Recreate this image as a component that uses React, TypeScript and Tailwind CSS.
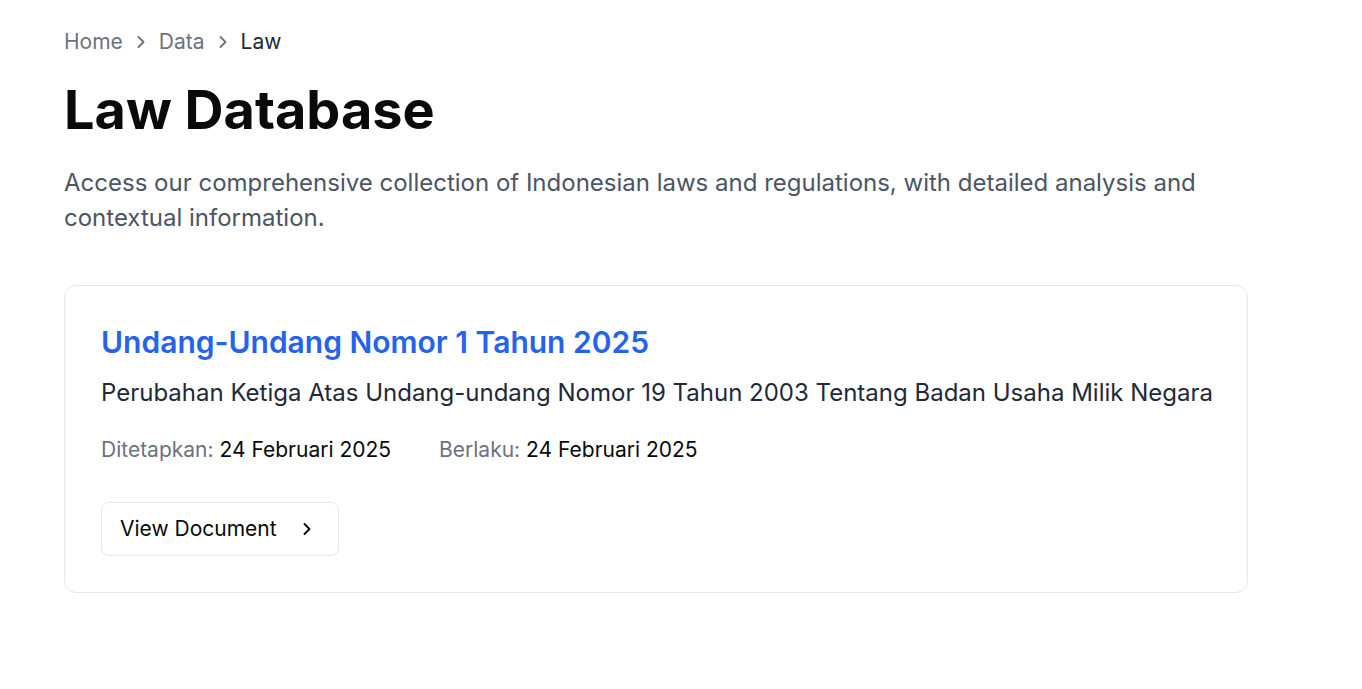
import React from 'react';
import { ChevronRight } from 'lucide-react';

const App: React.FC = () => {
    const crumbs = ['Home', 'Data'];

    return (
        <div className="min-h-screen bg-white font-['Inter',sans-serif]">
            <div className="ml-16 w-[1184px] pt-[28px]">
                {/* BREADCRUMB */}
                <nav className="flex items-center gap-[8px] text-[21px] leading-[28px] text-[#6b7280]">
                    {crumbs.map((c) => (
                        <React.Fragment key={c}>
                            <span>{c}</span>
                            <ChevronRight className="w-5 h-5" strokeWidth={2.25} />
                        </React.Fragment>
                    ))}
                    <span className="text-[#1f2937]">Law</span>
                </nav>

                <h1 className="mt-[24px] text-[54px] leading-[60px] font-bold text-[#0a0a0a]">Law Database</h1>

                <p className="mt-[25px] text-2xl leading-[35px] text-[#4b5563] max-w-[1150px]">
                    Access our comprehensive collection of Indonesian laws and regulations, with detailed analysis and contextual information.
                </p>

                {/* CARD */}
                <div className="mt-[50px] rounded-xl border border-[#e5e7eb] p-9">
                    <h2 className="text-3xl leading-10 font-semibold text-[#2563eb]">Undang-Undang Nomor 1 Tahun 2025</h2>
                    <p className="mt-[15px] text-2xl leading-8 text-[#1f2937] whitespace-nowrap">
                        Perubahan Ketiga Atas Undang-undang Nomor 19 Tahun 2003 Tentang Badan Usaha Milik Negara
                    </p>
                    <div className="mt-[27px] flex items-center gap-12 text-[21px] leading-[28px]">
                        <div>
                            <span className="text-[#6b7280]">Ditetapkan: </span>
                            <span className="text-[#0a0a0a]">24 Februari 2025</span>
                        </div>
                        <div>
                            <span className="text-[#6b7280]">Berlaku: </span>
                            <span className="text-[#0a0a0a]">24 Februari 2025</span>
                        </div>
                    </div>
                    <button className="mt-[38px] flex items-center gap-5 rounded-lg border border-[#e5e7eb] pl-[18px] pr-[21px] h-[54px] text-[21px] text-[#0a0a0a]">
                        View Document
                        <ChevronRight className="w-5 h-5" strokeWidth={2.25} />
                    </button>
                </div>
            </div>
        </div>
    );
};

export default App;
